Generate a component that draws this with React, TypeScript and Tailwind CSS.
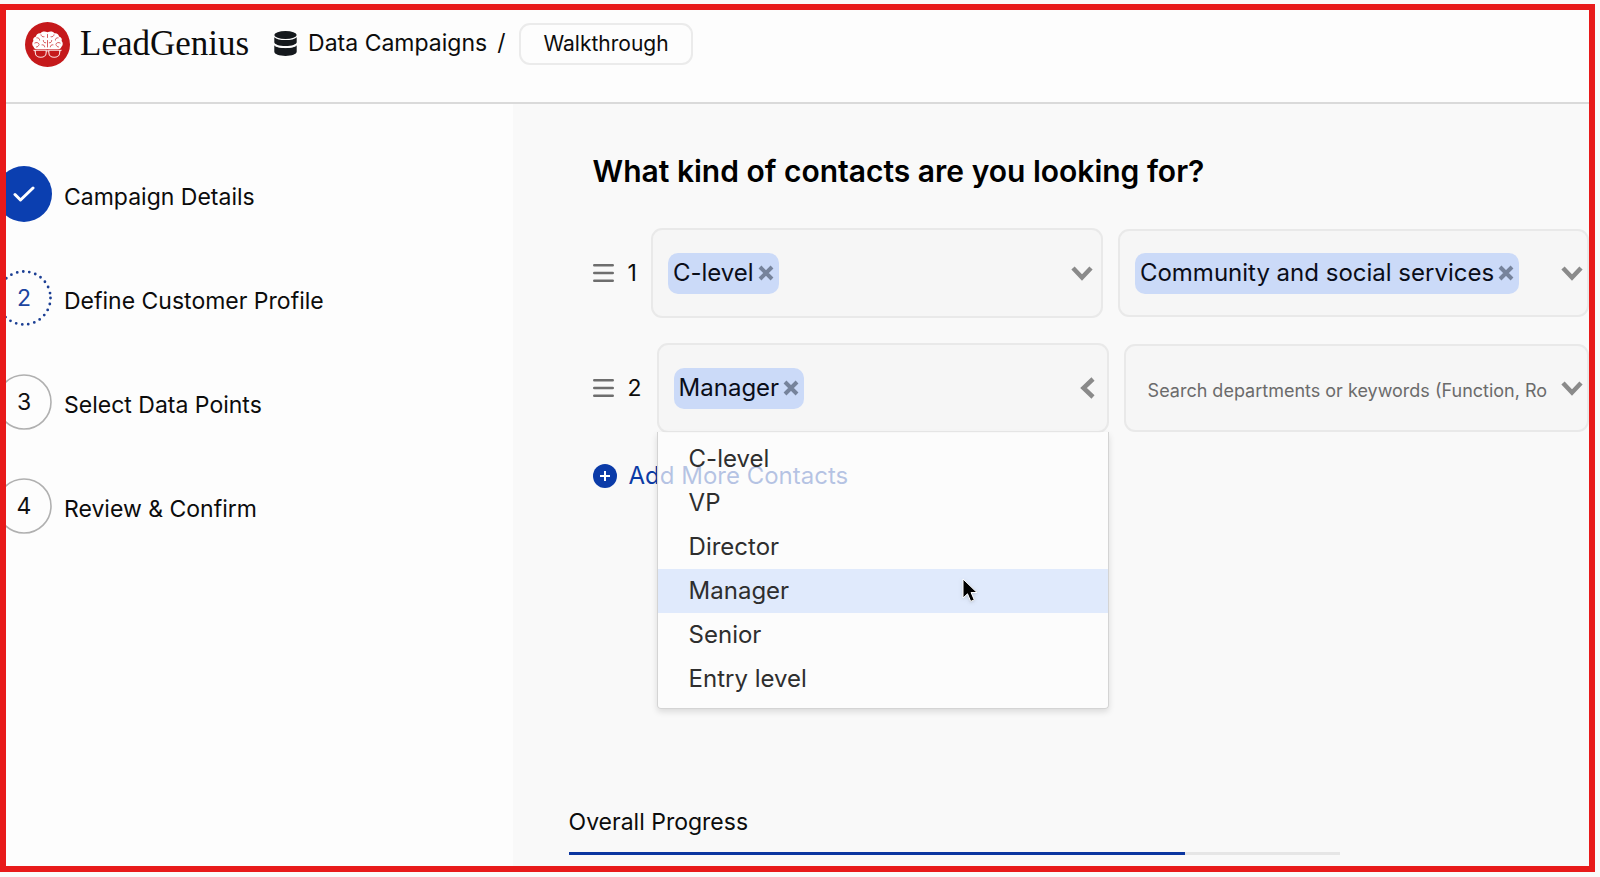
import { useState } from "react";
import clsx from "clsx";

const STEPS = [
  { id: 1, label: "Campaign Details", status: "done" },
  { id: 2, label: "Define Customer Profile", status: "current" },
  { id: 3, label: "Select Data Points", status: "todo" },
  { id: 4, label: "Review & Confirm", status: "todo" },
] as const;

const LEVELS = ["C-level", "VP", "Director", "Manager", "Senior", "Entry level"];

const PROGRESS = 80;

function Logo() {
  return (
    <svg viewBox="0 0 45 45" className="h-[45px] w-[45px] shrink-0" aria-hidden="true">
      <circle cx="22.5" cy="22.5" r="22.5" fill="#c5191b" />
      {/* brain */}
      <path
        d="M22.500 10.300c-2.400-1.500-5.800-1.100-6.900.9-2.600-.3-4.500 1-4.600 3.200-2.400.6-3.400 2.700-2.600 4.700-1.600 1.500-1.500 4.400.1 5.700.6 2 2.600 2.900 4.500 2.400h19c1.900.5 3.900-.4 4.500-2.400 1.600-1.300 1.700-4.200.1-5.700.8-2-.2-4.100-2.600-4.700-.1-2.200-2-3.500-4.600-3.200-1.100-2-4.500-2.400-6.900-.9z"
        fill="#fff"
      />
      <g fill="none" stroke="#c5191b" strokeWidth="0.700" strokeLinecap="round">
        <path d="M22.500 12.500v3M22.500 18.500v6.500" />
        <path d="M16 12.800c.3 1.500 1.500 2.300 3 2M11.800 15.800c1.900-.2 2.900.7 2.800 2.300M9.800 21c1.800-1 3.500-.6 4.300 1.100M18.300 18.500c0 1.600 1 2.500 2.400 2.300M13.800 23c-.3 1.200-1.100 1.900-2.300 2M17 22.800c1.500-.3 2.600.6 2.700 2.100" />
        <path d="M29 12.800c-.3 1.500-1.500 2.300-3 2M33.200 15.800c-1.900-.2-2.900.7-2.800 2.300M35.200 21c-1.800-1-3.500-.6-4.300 1.100M26.700 18.500c0 1.600-1 2.500-2.400 2.300M31.200 23c.3 1.200 1.100 1.900 2.300 2M28 22.800c-1.500-.3-2.600.6-2.700 2.100" />
      </g>
      {/* glasses */}
      <g fill="#c5191b" stroke="#fbe3e3" strokeWidth="1.100">
        <path d="M10.300 28.200h10.900v2.200c0 2.800-2.300 4.900-5.400 4.900s-5.500-2.100-5.500-4.900z" />
        <path d="M23.800 28.200h10.900v2.200c0 2.800-2.400 4.900-5.500 4.900s-5.400-2.100-5.400-4.900z" />
        <path d="M21.200 29.200c.8-.6 1.800-.6 2.600 0M10.300 29l-1.800-1M34.700 29l1.800-1" fill="none" />
      </g>
    </svg>
  );
}

function DatabaseIcon() {
  return (
    <svg viewBox="0 0 23 25" className="h-[25px] w-[23px] shrink-0" fill="#15191d" aria-hidden="true">
      <ellipse cx="11.500" cy="4" rx="11.200" ry="4" />
      <path d="M.3 6.200c1.800 2 6 2.900 11.200 2.900s9.400-.9 11.200-2.900v5c0 2.100-5 3.800-11.200 3.800S.3 13.300.3 11.200z" />
      <path d="M.3 14c1.800 2 6 2.900 11.200 2.900s9.400-.9 11.200-2.900v6.800c0 2.300-5 4.200-11.200 4.200S.3 23.100.3 20.800z" />
      <path d="M.3 14.200c3.500 3.200 18.900 3.200 22.400 0" fill="none" stroke="#fdfdfd" strokeWidth="1" />
    </svg>
  );
}

function CloseIcon() {
  return (
    <svg viewBox="0 0 16 16" className="h-4 w-4" fill="none" stroke="#76839b" strokeWidth="4" aria-hidden="true">
      <path d="M2 2l12 12M14 2L2 14" />
    </svg>
  );
}

function Chevron({ open = false }: { open?: boolean }) {
  return (
    <svg
      viewBox="0 0 22 22"
      className={clsx("h-[22px] w-[22px]", open && "rotate-90")}
      fill="none"
      stroke="#8a8a8a"
      strokeWidth="4.500"
      aria-hidden="true"
    >
      <path d="M2 6l9 9.500L20 6" />
    </svg>
  );
}

function DragHandle() {
  return (
    <svg viewBox="0 0 21 20" className="h-5 w-[21px]" stroke="#6e6e6e" strokeWidth="2.600" strokeLinecap="round" aria-hidden="true">
      <path d="M1.300 2.300h18.400M1.300 10h18.400M1.300 17.700h18.400" />
    </svg>
  );
}

function Chip({ label }: { label: string }) {
  return (
    <span className="flex h-[41px] items-center gap-1 rounded-[10px] bg-[#cbdaf8] px-[5px] text-[24px] whitespace-nowrap text-[#0a0d18]">
      {label}
      <button type="button" aria-label={`Remove ${label}`}>
        <CloseIcon />
      </button>
    </span>
  );
}

function StepBadge({ id, status }: { id: number; status: string }) {
  if (status === "done") {
    return (
      <span className="flex h-14 w-14 shrink-0 items-center justify-center rounded-full bg-[#0b3fb0]">
        <svg viewBox="0 0 22 16" className="h-4 w-[22px]" fill="none" stroke="#fff" strokeWidth="3" strokeLinecap="round" strokeLinejoin="round" aria-hidden="true">
          <path d="M2 8.500l5.500 5.500L20 2" />
        </svg>
      </span>
    );
  }
  const current = status === "current";
  return (
    <span
      className={clsx(
        "relative flex h-14 w-14 shrink-0 items-center justify-center text-[23px]",
        current ? "text-[#1c449f]" : "text-[#111]"
      )}
    >
      <svg viewBox="0 0 56 56" className="absolute inset-0" fill="none" aria-hidden="true">
        {current ? (
          <circle cx="28" cy="28" r="26.500" stroke="#1c3f94" strokeWidth="2.800" strokeDasharray="0 6.166" strokeLinecap="round" />
        ) : (
          <circle cx="28" cy="28" r="27" stroke="#b0b0b0" strokeWidth="1.600" />
        )}
      </svg>
      {id}
    </span>
  );
}

export default function App() {
  const [level, setLevel] = useState("Manager");
  const [open, setOpen] = useState(true);

  return (
    <div className="flex min-h-screen bg-[#fafafa] pt-1 pr-[5px] pb-[5px] font-['Inter','Liberation_Sans',sans-serif] text-[#0c0c0c]">
      <div className="flex min-w-0 flex-1 flex-col overflow-hidden border-6 border-[#e81a1a] bg-[#fdfdfd]">
        <header className="flex h-[94px] items-start border-b-2 border-[#dadada] pt-[11px] pl-[19px]">
          <a href="#" className="flex items-center gap-[10px]">
            <Logo />
            <span className="font-['Liberation_Serif',serif] text-[35px] leading-[46px]">LeadGenius</span>
          </a>
          <nav aria-label="Breadcrumb" className="ml-[25px] flex h-[45px] items-center text-[23px]">
            <DatabaseIcon />
            <a href="#" className="ml-[11px]">
              Data Campaigns
            </a>
            <span className="ml-[10px]">/</span>
            <button type="button" className="ml-[14px] h-[42px] rounded-[11px] border-2 border-[#ebebeb] px-[22px] text-[21px]">
              Walkthrough
            </button>
          </nav>
        </header>

        <div className="flex flex-1">
          <aside className="w-[32%] shrink-0 pt-[62px]">
            <ol className="-ml-[10px] flex flex-col gap-12">
              {STEPS.map((step) => (
                <li key={step.id} className="flex items-center gap-3 text-[23px]">
                  <StepBadge id={step.id} status={step.status} />
                  <a href="#" className="pt-[6px]">
                    {step.label}
                  </a>
                </li>
              ))}
            </ol>
          </aside>

          <main className="flex min-w-0 flex-1 flex-col bg-[#f9f9f9] pt-[46px]">
            <h1 className="pl-20 text-[30px] leading-[42px] font-semibold text-black">
              What kind of contacts are you looking for?
            </h1>

            <div className="mt-9 flex items-center pl-20">
              <DragHandle />
              <span className="ml-[14px] text-[23px]">1</span>
              <div className="ml-[14px] flex h-[90px] w-[452px] shrink-0 items-center justify-between rounded-[11px] border-2 border-[#e9e9e9] bg-[#f6f6f6] pr-2 pl-[15px]">
                <Chip label="C-level" />
                <button type="button" aria-label="Choose level">
                  <Chevron />
                </button>
              </div>
              <div className="ml-[15px] flex h-[88px] min-w-0 flex-1 items-center justify-between rounded-[11px] border-2 border-[#e9e9e9] bg-[#f6f6f6] pr-1 pl-[15px]">
                <Chip label="Community and social services" />
                <button type="button" aria-label="Choose department">
                  <Chevron />
                </button>
              </div>
            </div>

            <div className="mt-[25px] flex items-center pl-20">
              <DragHandle />
              <span className="ml-[14px] text-[23px]">2</span>
              <div className="relative ml-[15px] flex h-[90px] w-[452px] shrink-0 items-center justify-between rounded-[11px] border-2 border-[#e9e9e9] bg-[#f6f6f6] pr-2 pl-[15px]">
                <Chip label={level} />
                <button type="button" aria-label="Choose level" aria-expanded={open} onClick={() => setOpen(!open)}>
                  <Chevron open={open} />
                </button>
                {open && (
                  <ul
                    role="listbox"
                    aria-label="Level"
                    className="absolute -inset-x-[2px] top-[87px] z-10 rounded-b-[4px] border-x border-b border-[#d4d4d4] bg-[#fefefe]/70 pt-[5px] pb-[7px] text-[24px] text-[#2e2e2e] shadow-[0_3px_6px_rgba(0,0,0,0.12)]"
                  >
                    {LEVELS.map((name) => (
                      <li
                        key={name}
                        role="option"
                        aria-selected={name === level}
                        onClick={() => setLevel(name)}
                        className={clsx("flex h-11 items-center pl-[31px]", name === level && "bg-[#e0eafc]")}
                      >
                        {name}
                      </li>
                    ))}
                    {/* pointer */}
                    <svg viewBox="0 0 16 26" className="absolute top-[146px] left-[304px] h-[26px] w-4 drop-shadow" aria-hidden="true">
                      <path d="M1 1v19l4.500-4.200 3.200 7.600 3.600-1.500-3.200-7.400H15z" fill="#000" stroke="#fff" strokeWidth="1" />
                    </svg>
                  </ul>
                )}
              </div>
              <div className="ml-[15px] flex h-[88px] min-w-0 flex-1 items-center rounded-[11px] border-2 border-[#e9e9e9] bg-[#f6f6f6] pr-1 pl-[22px]">
                <input
                  type="text"
                  aria-label="Departments or keywords"
                  placeholder="Search departments or keywords (Function, Ro"
                  className="min-w-0 flex-1 bg-transparent pt-1 text-[18px] outline-none placeholder:text-[#6b6b6b]"
                />
                <button type="button" aria-label="Choose department" className="ml-3">
                  <Chevron />
                </button>
              </div>
            </div>

            <button type="button" className="mt-[25px] ml-20 flex items-center gap-3 self-start text-[24px] text-[#0b3ba5]">
              <svg viewBox="0 0 24 24" className="h-6 w-6" aria-hidden="true">
                <circle cx="12" cy="12" r="12" fill="#0b3ba8" />
                <path d="M12 7v10M7 12h10" stroke="#fff" strokeWidth="2" />
              </svg>
              Add More Contacts
            </button>

            <section className="mt-auto pb-[11px] pl-14">
              <p id="progress-label" className="text-[23px] leading-8">
                Overall Progress
              </p>
              <div
                role="progressbar"
                aria-labelledby="progress-label"
                aria-valuenow={PROGRESS}
                className="mt-[14px] h-[3px] w-[771px] max-w-full bg-[#e6e6e6]"
              >
                <div className="h-full bg-[#0b36a0]" style={{ width: `${PROGRESS}%` }} />
              </div>
            </section>
          </main>
        </div>
      </div>
    </div>
  );
}
